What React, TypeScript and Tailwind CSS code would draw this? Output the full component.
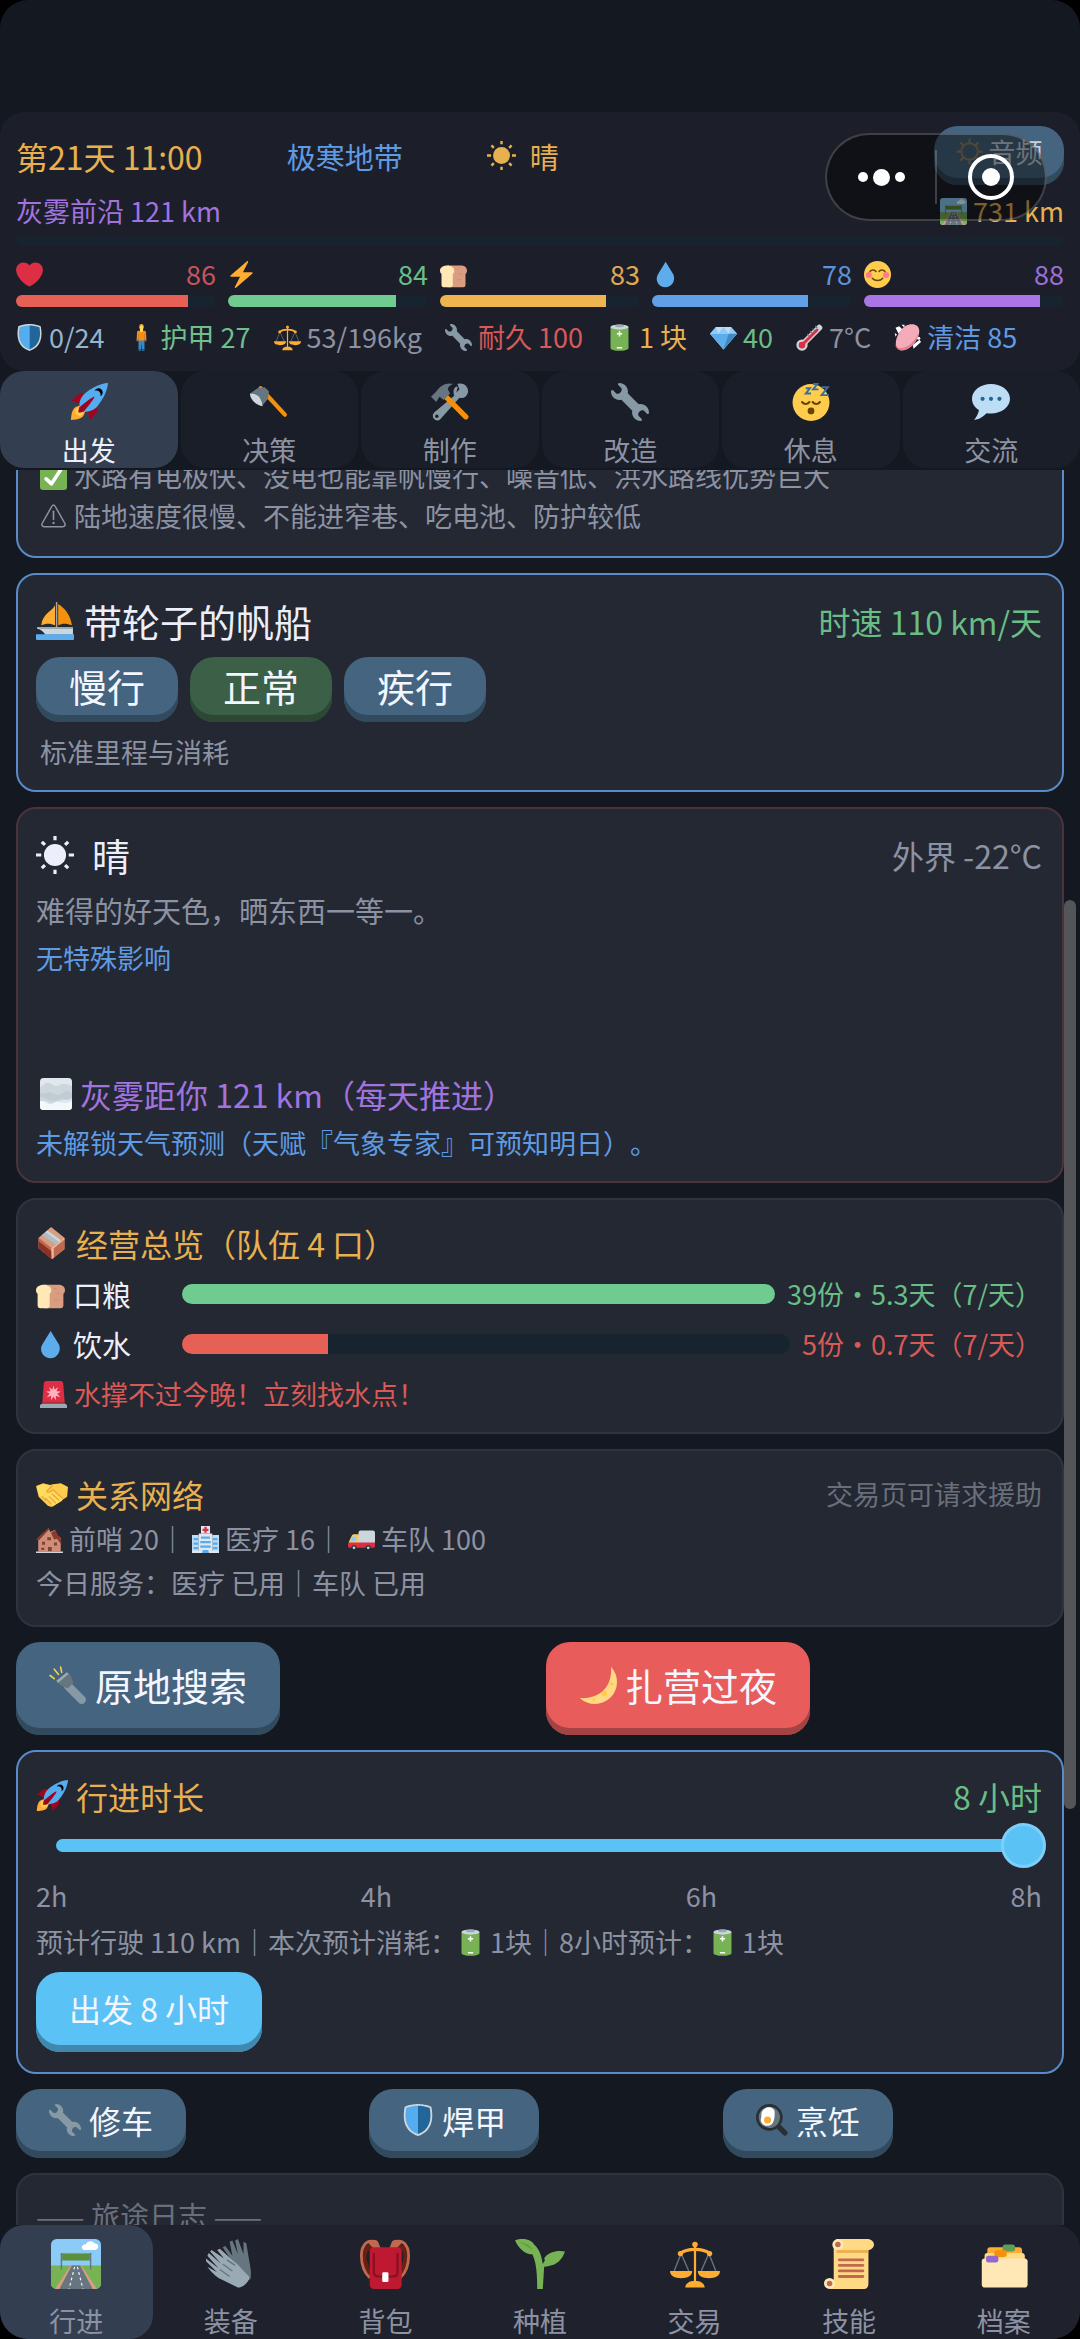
import { useState, type ReactNode } from "react";
import clsx from "clsx";

const WRENCH =
  "M27.989 19.977c-.622 0-1.225.078-1.806.213L15.811 9.818c.134-.581.212-1.184.212-1.806C16.023 3.587 12.436 0 8.012 0 7.11 0 5.91.916 6.909 1.915l2.997 2.997s.999 1.998-.999 3.995-3.996.998-3.996.998L1.915 6.908C.915 5.909 0 7.105 0 8.012c0 4.425 3.587 8.012 8.012 8.012.622 0 1.225-.078 1.806-.212l10.371 10.371c-.135.581-.213 1.184-.213 1.806 0 4.425 3.588 8.011 8.012 8.011.901 0 2.101-.916 1.102-1.915l-2.997-2.997s-.999-1.998.999-3.995 3.995-.999 3.995-.999l2.997 2.997c1 .999 1.916-.197 1.916-1.104 0-4.423-3.587-8.01-8.011-8.01z";

// all icons share a 36x36 view box
const icons: Record<string, ReactNode> = {
  heart: (
    <path fill="#DD2E44" d="M35.885 11.833c0-5.45-4.418-9.868-9.867-9.868-3.308 0-6.227 1.633-8.018 4.129-1.791-2.496-4.71-4.129-8.017-4.129-5.45 0-9.868 4.417-9.868 9.868 0 .772.098 1.52.266 2.241C1.751 22.587 11.216 31.568 18 34.034c6.783-2.466 16.249-11.447 17.617-19.959.17-.721.268-1.469.268-2.242z" />
  ),
  zap: (
    <path fill="#FFAC33" d="M32.938 15.651C32.792 15.26 32.418 15 32 15H19.925L26.89 1.458c.219-.426.106-.947-.271-1.243C26.437.071 26.218 0 26 0c-.233 0-.466.082-.653.243L18 6.588 3.347 19.243c-.316.273-.43.714-.284 1.105S3.582 21 4 21h12.075L9.11 34.542c-.219.426-.106.947.271 1.243.182.144.401.215.619.215.233 0 .466-.082.653-.243L18 29.412l14.653-12.655c.317-.273.43-.714.285-1.106z" />
  ),
  bread: (
    <>
      <path fill="#D99E82" d="M10 6h18c5 0 8 3 8 6.500 0 2.500-1 4-2 4.500v15a3 3 0 0 1-3 3H10z" />
      <path fill="#FFE8B6" d="M9.500 6C4 6 0 9 0 12.500 0 15 1 16.500 2 17v15a3 3 0 0 0 3 3h9a3 3 0 0 0 3-3V17c1-.5 2-2 2-4.500C19 9 15 6 9.500 6z" />
      <path stroke="#C1694F" strokeWidth="1" d="M22 10l4 1M25 17h5M22 25h6" opacity=".4" />
    </>
  ),
  drop: (
    <path fill="#5DADEC" d="M28.344 17.768L18.148 1.09 8 17.654c-2.200 3.510-2.392 8.074-.081 11.854 3.285 5.373 10.363 7.098 15.811 3.857 5.446-3.240 7.199-10.220 4.614-15.597z" />
  ),
  smile: (
    <>
      <circle cx="18" cy="18" r="18" fill="#FFCC4D" />
      <circle cx="6.500" cy="18.500" r="4" fill="#FF7892" />
      <circle cx="29.500" cy="18.500" r="4" fill="#FF7892" />
      <path fill="none" stroke="#664500" strokeWidth="2" strokeLinecap="round" d="M8 14c2-2.800 6-2.800 8 0M20 14c2-2.800 6-2.800 8 0M11 23c3.500 4 10.500 4 14 0" />
    </>
  ),
  shield: (
    <>
      <path fill="#CCD6DD" d="M33 3c-7-3-15-3-15-3S10 0 3 3C0 18 3 31 18 36c15-5 18-18 15-33z" />
      <path fill="#55ACEE" d="M18 33.884C6.412 29.729 1.961 19.831 4.760 4.444 11.063 2.029 17.928 2 18 2v31.884z" />
      <path fill="#226699" d="M31.240 4.444C24.937 2.029 18.071 2 18 2v31.884c11.588-4.155 16.039-14.053 13.240-29.440z" />
    </>
  ),
  person: (
    <>
      <path fill="#3B88C3" d="M14 20h8v14h-3.500l-.5-10-.5 10H14z" />
      <path fill="#F4900C" d="M14 9h8c1.500 0 2 1 2 2.500l.5 9.500h-2.500l-.5 1h-7l-.5-1h-2.500l.5-9.500C12 10 12.500 9 14 9z" />
      <path fill="#C1694F" d="M11.500 20h2.500v3h-2.500zM22 20h2.500v3H22zM14 13h.6v7H14zM21.400 13h.6v7h-.6z" />
      <path fill="#FFDC5D" d="M16 6h4v3.500l-2 1.500-2-1.500z" />
      <ellipse cx="18" cy="4.500" rx="2.800" ry="3.500" fill="#FFDC5D" />
      <path fill="#FFAC33" d="M15 4c0-2.500 1-4 3-4s3 1.500 3 4c-1-2-5-2-6 0z" />
      <path fill="#226699" d="M14 34h3.500v2H14zM18.500 34H22v2h-3.500z" />
    </>
  ),
  scales: (
    <>
      <path fill="none" stroke="#66757F" strokeWidth="1" d="M8 10.500L3 23M8 10.500L13.500 23M28 10.500L22.500 23M28 10.500L33 23" />
      <path fill="#FFAC33" d="M17.200 5h1.600v27h-1.600zM0 23h16c0 3.500-3.500 5.200-8 5.200S0 26.500 0 23zM20 23h16c0 3.500-3.500 5.200-8 5.200s-8-1.700-8-5.200zM11 35c0-3 3-5 7-5s7 2 7 5z" />
      <path fill="none" stroke="#FFAC33" strokeWidth="2.400" d="M7.500 10.500C12 6.500 24 6.500 28.500 10.500" />
      <circle cx="18" cy="4" r="2" fill="#FFAC33" />
      <circle cx="7.500" cy="10.500" r="1.900" fill="#FFAC33" />
      <circle cx="28.500" cy="10.500" r="1.900" fill="#FFAC33" />
    </>
  ),
  wrench: <path fill="#8899A6" d={WRENCH} />,
  battery: (
    <>
      <path fill="#77B255" d="M6 4h24v28c0 5-24 5-24 0z" />
      <ellipse cx="18" cy="4" rx="12" ry="3.500" fill="#CCD6DD" />
      <ellipse cx="18" cy="2.500" rx="6" ry="1.800" fill="#99AAB5" />
      <path fill="#fff" d="M17 9.500h2V12h2.500v2H19v2.500h-2V14h-2.500v-2H17zM14.500 30.500h7v2h-7z" />
    </>
  ),
  gem: (
    <>
      <path fill="#BDDDF4" d="M8 4h20l8 9-18 21L0 13z" />
      <path fill="#5DADEC" d="M0 13h36L18 34z" />
      <path fill="#8CCAF7" d="M0 13l8-9 3 9zM18 4l7 9H11zM36 13l-8-9-3 9z" />
      <path fill="#4289C1" d="M25 13h11L18 34z" />
    </>
  ),
  thermo: (
    <>
      <path stroke="#CCD6DD" strokeWidth="8" strokeLinecap="round" d="M31 5L10 26" />
      <circle cx="8" cy="28" r="7.500" fill="#CCD6DD" />
      <path stroke="#DD2E44" strokeWidth="4" strokeLinecap="round" d="M28 8L9 27" />
      <circle cx="8" cy="28" r="4.500" fill="#DD2E44" />
      <path stroke="#66757F" strokeWidth="1.400" d="M15 13l3 3M18.500 9.500l3 3M22 6l3 3M25.500 2.500l3 3" />
    </>
  ),
  soap: (
    <>
      <path fill="#fff" d="M2 5l5-2 4 4-5 6zM25 28l9-7 2 3-10 9zM10 1h4v4zM1 12l3 2-2 3z" />
      <path fill="#F4ABBA" d="M8 10C13 1 24-2 30 2s4 13-1 21-14 14-21 12S0 22 8 10z" />
      <path fill="#EA596E" d="M1 25c1 5 5 8 10 7 8-1 17-9 21-19-1 12-14 23-23 22C3 34 1 30 1 25z" opacity=".6" />
      <circle cx="33" cy="19" r="2" fill="#fff" />
    </>
  ),
  road: (
    <>
      <rect width="36" height="36" rx="4" fill="#8CCAF7" />
      <path fill="#77B255" d="M0 19h36v13a4 4 0 0 1-4 4H4a4 4 0 0 1-4-4z" />
      <path fill="#99AAB5" d="M7 10h22v1.500H7z" />
      <path fill="#66757F" d="M7 10h1v12H7zM28 10h1v12h-1z" />
      <path fill="#5C913B" d="M8 10.500h20v5H8z" />
      <path fill="#D99E82" d="M14 19h8l11 17H3z" />
      <path fill="#66757F" d="M15 19h6l9 17H6z" />
      <path stroke="#fff" strokeWidth=".8" strokeDasharray="2 2" d="M17 20l-4 16M19 20l4 16" />
      <path fill="#fff" d="M23 7.500c-2-2 0-4 2-3.500 1-3 5-3 6-1 2 0 3 1 3 2.500S32 8 31 8h-7z" />
    </>
  ),
  rocket: (
    <>
      <path fill="#A0041E" d="M1 17l8-7 16 1 1 16-7 8s.001-5.999-6-12-12-6-12-6z" />
      <path fill="#FFAC33" d="M.973 35s-.036-7.979 2.985-11S15 21.187 15 21.187 14.999 29 11.999 32c-3 3-11.026 3-11.026 3z" />
      <circle cx="9" cy="27" r="4" fill="#FFCC4D" />
      <path fill="#55ACEE" d="M35.999 0s-10 0-22 10c-6 5-6 14-4 16s11 2 16-4c10-12 10-22 10-22z" />
      <path fill="#000" d="M26.999 5c-1.623 0-3.013.971-3.641 2.360.502-.227 1.055-.36 1.641-.36 2.209 0 4 1.791 4 4 0 .586-.133 1.139-.359 1.640 1.389-.627 2.359-2.017 2.359-3.640 0-2.209-1.791-4-4-4z" />
      <path fill="#A0041E" d="M8 28s0-4 1-5 13.001-10.999 14-10-9.001 13-10.001 14S8 28 8 28z" />
    </>
  ),
  axe: (
    <>
      <path stroke="#F4900C" strokeWidth="4" strokeLinecap="round" d="M10 5l23 25" />
      <path fill="#66757F" d="M7 5l7-1 4 4-1 7-5 6C11 14 8 10 0 10z" />
      <path fill="#CCD6DD" d="M0 10c8 0 11 4 12 12C6 21 0 16 0 10z" />
    </>
  ),
  tools: (
    <>
      <g transform="translate(36 0) scale(-1 1)">
        <path fill="#8899A6" d="M12 9l-3-3 2-5C5-1 0 4 1 9c1 4 4 6 8 5l18 20c4 4 10-1 6-6L14 12c1-3 1-6-1-8-1-1-3-1-2 1z" />
      </g>
      <circle cx="5.500" cy="31.500" r="1.600" fill="#1b1f29" />
      <path stroke="#F4900C" strokeWidth="5" strokeLinecap="round" d="M14 13l19 19" />
      <path fill="#66757F" d="M0 13l5-5C9 2 15-1 21 1c-3 1-5 3-5 5l2 4-6 6-4-3-3 5z" />
    </>
  ),
  sleep: (
    <>
      <circle cx="18" cy="18.500" r="17.500" fill="#FFCC4D" />
      <path fill="none" stroke="#664500" strokeWidth="2" strokeLinecap="round" d="M9.500 18c2 2.500 5 2.500 7 0M19.500 18c2 2.500 5 2.500 7 0" />
      <circle cx="18" cy="26.500" r="3.200" fill="#664500" />
      <path fill="none" stroke="#3B6E99" strokeWidth="1.800" d="M13 5h4l-4 5h5M20 1h4l-4 5h5M28 4h6l-6 7.500h7" />
    </>
  ),
  speech: (
    <>
      <path fill="#BDDDF4" d="M18 1C8.059 1 0 7.268 0 15c0 4.368 2.574 8.268 6.604 10.835C6.080 28.144 4.859 31.569 2 35c5.758-.96 9.439-3.761 11.716-6.416 1.376.262 2.805.416 4.284.416 9.941 0 18-6.268 18-14S27.941 1 18 1z" />
      <g fill="#226699">
        <circle cx="10" cy="15" r="2" />
        <circle cx="18" cy="15" r="2" />
        <circle cx="26" cy="15" r="2" />
      </g>
    </>
  ),
  check: (
    <>
      <rect width="36" height="36" rx="4" fill="#77B255" />
      <path fill="#fff" d="M29.280 6.362c-1.156-.751-2.704-.422-3.458.736L14.936 23.877l-5.029-4.650c-1.014-.938-2.596-.875-3.533.138-.937 1.014-.875 2.596.139 3.533l7.209 6.666c.48.445 1.090.665 1.696.665.673 0 1.534-.282 2.099-1.139.332-.506 12.500-19.270 12.500-19.270.751-1.159.421-2.707-.737-3.458z" />
    </>
  ),
  warning: (
    <>
      <path fill="none" stroke="currentColor" strokeWidth="2" strokeLinejoin="round" d="M16 4c1-2 3-2 4 0l13 23c1.200 2.500 0 4.500-2.500 4.500h-25C3 31.500 1.800 29.500 3 27z" />
      <path stroke="currentColor" strokeWidth="2.200" strokeLinecap="round" d="M18 11v11" />
      <circle cx="18" cy="26.500" r="1.600" fill="currentColor" />
    </>
  ),
  boat: (
    <>
      <path fill="#FFAC33" d="M18 3C15 9 6 11 5 22c4-2 9-2 13 0z" />
      <path fill="#F4900C" d="M21 2c7 4 12 12 13 20-5-2-9-2-13 0z" />
      <path fill="#99AAB5" d="M18.800 0h1.400v26h-1.400z" />
      <path fill="#CCD6DD" d="M1 24h34v7H9c-2-3-4-5-8-6z" />
      <path fill="#99AAB5" d="M2 24h33v1.500H4z" />
      <path fill="#5DADEC" d="M0 30.500h36V35a1 1 0 0 1-1 1H1a1 1 0 0 1-1-1z" />
    </>
  ),
  sun: (
    <>
      <circle cx="18" cy="18" r="10.500" fill="currentColor" />
      <path stroke="currentColor" strokeWidth="3" d="M18 0v4M18 32v4M0 18h5M31 18h5M5.500 5.500l3 3M27.500 27.500l3 3M5.500 30.500l3-3M27.500 8.500l3-3" />
    </>
  ),
  gear: (
    <>
      <circle cx="18" cy="18" r="11" fill="none" stroke="currentColor" strokeWidth="2.500" />
      <path stroke="currentColor" strokeWidth="3" d="M18 1v5M18 30v5M1 18h5M30 18h5M6 6l3.500 3.500M26.500 26.500L30 30M6 30l3.500-3.500M26.500 9.500L30 6" />
    </>
  ),
  fog: (
    <>
      <rect width="36" height="36" rx="4" fill="#E1E8ED" />
      <path fill="#CCD6DD" d="M0 10c5-2 6-6 11-4s6 5 11 2 9-1 14 1v14c-5 4-9 0-13 3s-8 6-13 2-6-1-10-2z" />
      <path fill="#B8C4CD" d="M0 17c6 3 8-3 14 0s8 3 13-1 6 0 9 1v5c-6 4-10-1-15 2s-12 1-15-1-4-1-6-1z" opacity=".6" />
      <path fill="#F5F8FA" d="M0 26c5-1 7 4 12 3s6-4 11-2 8 2 13-1v6a4 4 0 0 1-4 4H4a4 4 0 0 1-4-4z" />
    </>
  ),
  brick: (
    <>
      <path fill="#D99E82" d="M3 12L17 0l15 12v13L18 36 3 24z" />
      <path fill="#C1694F" d="M3 12l15 12v12L3 24z" />
      <path fill="#8A3324" d="M3 16l14 11v9L3 24z" />
      <path fill="#CCD6DD" d="M7 9l6-5 14 10v6l-3 1z" />
      <path fill="#99AAB5" d="M7 9l4-3 15 11v3l-3 1z" opacity=".6" />
      <path fill="#C1694F" d="M19 24l13-11v12L18 36z" />
      <path fill="#E8B59C" d="M17 24l15-12v2L20 24v11l-2 1z" />
    </>
  ),
  siren: (
    <>
      <path fill="#99AAB5" d="M3 30h30l3 2v4H0v-4z" />
      <path fill="#DD2E44" d="M5 4c0-2 1-4 4-4h18c3 0 4 2 4 4l2 25H3z" />
      <path fill="#FFB3C1" d="M18 6l1.500 5.500L24 8l-2 5.500 6 .5-5 3 4 4.500-6-2 .5 6L18 21l-3.500 4.500.5-6-6 2 4-4.500-5-3 6-.5L12 8l4.500 3.500z" />
    </>
  ),
  handshake: (
    <>
      <path fill="#FFCC4D" d="M0 9l8-3 8 2 3-1 9-1 8 4-1 11-7 5-9 6c-2 1-4 0-6-1L3 21z" />
      <path fill="#FFDC5D" d="M1 10l7-3 8 2-5 7c2 3 6 0 8-1l11 9-1 2-9 5L4 20z" />
      <path fill="none" stroke="#E9A23B" strokeWidth="1.300" strokeLinecap="round" d="M18 9l-6 6c2 2 5 0 7-2l11 10M18 18l8 7M15 21l7 7M11 23l6 6M7 21l4 4" />
    </>
  ),
  house: (
    <>
      <path fill="#D08C76" d="M3 34V16L17 3l2 5 6-3 2 6 6 5v18z" />
      <path fill="#8B3A2B" d="M0 18L16 3l2 1L4 19zM20 9l6-4 3 7 4 5 1 8-6-8-4 1z" />
      <path fill="#7A4436" d="M8 21h4v4H8zM16 28h5v7h-5zM24 22h4v4h-4zM15 15h5v4h-5zM7 29h4v3H7z" />
      <path fill="#CCD6DD" d="M0 34h36v2H0z" />
    </>
  ),
  hospital: (
    <>
      <path fill="#E1E8ED" d="M9 10h18v24H9z" />
      <path fill="#BDDDF4" d="M0 12h9v22H0zM27 12h9v22h-9z" />
      <path fill="#DCE8F0" d="M12 0h12v10H12z" />
      <path fill="#DD2E44" d="M16.500 1h3v2.500H22v3h-2.500V9h-3V6.500H14v-3h2.500z" />
      <path fill="#55ACEE" d="M2 16h6v3H2zM2 22h6v3H2zM2 28h6v3H2zM28 16h6v3h-6zM28 22h6v3h-6zM28 28h6v3h-6zM12 14h12v3H12zM11 20h14v3H11zM11 26h14v3H11zM14 32h8v4h-8z" />
      <path fill="#E1E8ED" d="M0 33h14v3H0zM22 33h14v3H22z" />
    </>
  ),
  van: (
    <>
      <path fill="#CCD6DD" d="M14 9a3 3 0 0 1 3-3h16a3 3 0 0 1 3 3v17H12z" />
      <path fill="#FFCC4D" d="M5 13c1-2 2-2 3-2h6v13H1c0-4 2-7 4-11z" />
      <path fill="#8CCAF7" d="M6 14h5v6H3z" />
      <path fill="#DD2E44" d="M0 24c0-1 1-2 2-2h34v5a2 2 0 0 1-2 2H2c-1 0-2-1-2-2z" />
      <g fill="#292F33">
        <circle cx="8" cy="29" r="3.500" />
        <circle cx="27" cy="29" r="3.500" />
      </g>
      <circle cx="8" cy="29" r="1.800" fill="#CCD6DD" />
      <circle cx="27" cy="29" r="1.800" fill="#CCD6DD" />
    </>
  ),
  flashlight: (
    <>
      <path stroke="#F2D35C" strokeWidth="1.500" strokeLinecap="round" d="M1 9l4 3M5 3l4 5M11 1l1 5" />
      <path stroke="#8899A6" strokeWidth="8" strokeLinecap="round" d="M18 19l13 13" />
      <path fill="#66757F" d="M7 14L17 6c4 2 5 6 6 10l-5 5c-4-1-8-2-11-7z" />
      <path fill="#99AAB5" d="M7 14L17 6l1.500 1.500-10 8.500z" />
    </>
  ),
  moon: (
    <>
      <path fill="#FFD983" d="M30.312.776C32 19 20 32 .776 30.312c8.199 7.717 21.091 7.588 29.107-.429C37.900 21.867 38.030 8.975 30.312.776z" />
      <g fill="#FFCC4D">
        <circle cx="31" cy="17" r="1.600" />
        <circle cx="24" cy="26" r="2.600" />
        <circle cx="14" cy="32" r="1.500" />
      </g>
    </>
  ),
  egg: (
    <>
      <path stroke="#292F33" strokeWidth="6" strokeLinecap="round" d="M26 26l6.500 6.500" />
      <circle cx="15" cy="15" r="15" fill="#292F33" />
      <circle cx="15" cy="15" r="12" fill="#66757F" />
      <path fill="#fff" d="M10 5c4-3 11-1 11 4s0 8-2 12-9 5-12 1-1-5-1-9 1-6 4-8z" />
      <circle cx="13" cy="18" r="4" fill="#FFAC33" />
    </>
  ),
  gloves: (
    <>
      <path fill="#66757F" d="M14 9l-2-3 2-1 5 7L17 2l2-1 4 10L21 1l2-1 4 11 0-9 2 1 2 12c1 6 2 9 1 14l-3 1z" />
      <path fill="#99AAB5" d="M4 8l9 6L8 8l2-1 10 9c3 2 5 5 8 8l3 3c1 3-4 8-8 8L9 28c-3-2-5-4-8-8l7 4-8-8v-2l9 7-8-9 1-2 9 8-8-9z" />
      <path fill="none" stroke="#66757F" strokeWidth="1" d="M12 18l7 5M10 22l7 5M15 15l6 4" />
    </>
  ),
  backpack: (
    <>
      <path fill="none" stroke="#662113" strokeWidth="4" d="M10 7C3 3 1 12 4 19c1 4 3 7 5 8M26 7c7-4 9 5 6 12-1 4-3 7-5 8" />
      <path fill="none" stroke="#C1694F" strokeWidth="2" d="M12 8V3C6-1 1 4 1 12c0 6 2 12 6 16M24 8V3c6-4 11 1 11 9 0 6-2 12-6 16" />
      <path fill="#C1694F" d="M5 2c3-2 7-2 8 0l2 5h-5zM31 2c-3-2-7-2-8 0l-2 5h5z" />
      <rect x="7" y="6" width="23" height="30" rx="3" fill="#BE1931" />
      <path fill="none" stroke="#8A0F22" strokeWidth="1.600" d="M10 10v14c0 2 1 3 3 3h11c2 0 3-1 3-3V10" />
      <rect x="16" y="24" width="4.500" height="7" rx="1" fill="#fff" />
    </>
  ),
  seedling: (
    <>
      <path fill="#77B255" d="M10 2c6 2 9 8 10 16 3-6 8-9 13-8-1 5-7 10-12 10l-1 16h-4C16 22 15 12 9 6z" />
      <path fill="#77B255" d="M0 1c5-2 13-1 14 4l-1 6C7 11 3 7 0 1zM36 9c-5-1-12 0-15 5l2 5c6 1 11-4 13-10z" />
      <path fill="#3E721D" d="M3 2c5 1 8 3 10 6-3-2-6-4-10-6z" opacity=".4" />
    </>
  ),
  scroll: (
    <>
      <path fill="#FFD983" d="M9 0h22c3 0 5 2 5 4s-2 4-4 4v24c0 2-1 4-3 4H4c2-1 3-3 3-6V4z" />
      <path fill="#E39F3D" d="M9 8h23v2H9z" opacity=".7" />
      <circle cx="10" cy="4" r="4" fill="#FFE8B6" />
      <circle cx="10" cy="4" r="2" fill="#C1694F" />
      <circle cx="4" cy="32" r="4" fill="#FFE8B6" />
      <circle cx="4" cy="32" r="2" fill="#C1694F" />
      <path stroke="#C1694F" strokeWidth="2" strokeLinecap="round" d="M11 15h17M11 19h17M11 23h17M11 27h17" />
    </>
  ),
  folder: (
    <>
      <path fill="#FFAC33" d="M6 8c0-1.500 1-2 2-2h21c1 0 2 1 2 2v8H6z" />
      <rect x="17" y="4" width="9" height="5" rx="2" fill="#5C9E58" />
      <path fill="#FFD983" d="M4 12c0-1.500 1-2 2-2h25c1 0 2 1 2 2v8H4z" />
      <rect x="11" y="8" width="9" height="5" rx="2" fill="#F4900C" />
      <path fill="#FFE8B6" d="M2 16c0-1.500 1-2 2-2h29c1 0 2 1 2 2v17c0 1-1 2-2 2H4c-1 0-2-1-2-2z" />
      <rect x="5" y="12" width="9" height="5" rx="2" fill="#9266CC" />
    </>
  ),
};

function Icon({ name, className = "size-[27px]" }: { name: string; className?: string }) {
  return (
    <svg viewBox="0 0 36 36" fill="none" aria-hidden="true" className={clsx("inline-block shrink-0", className)}>
      {icons[name]}
    </svg>
  );
}

const tones = {
  slate: "bg-[#45647f] shadow-[inset_0_-7px_0_#324a5d]",
  green: "bg-[#3b5f47] shadow-[inset_0_-7px_0_#2c4835]",
  red: "bg-[#e85d5b] shadow-[inset_0_-7px_0_#a34344]",
  sky: "bg-[#5ac2f5] shadow-[inset_0_-7px_0_#4088ae]",
};

function Pill({ tone = "slate", className, onClick, children }: { tone?: keyof typeof tones; className: string; onClick?: () => void; children: ReactNode }) {
  return (
    <button
      onClick={onClick}
      className={clsx("inline-flex items-center justify-center justify-self-start gap-2 rounded-[24px] px-[33px] pb-2 text-[#f3f6ff] whitespace-nowrap", tones[tone], className)}
    >
      {children}
    </button>
  );
}

function Card({ border = "border-[#2f333f]", children }: { border?: string; children: ReactNode }) {
  return <section className={clsx("shrink-0 rounded-[20px] border-2 bg-[#232833] py-5 pr-5 pl-[18px]", border)}>{children}</section>;
}

const stats = [
  { icon: "heart", value: 86, text: "text-[#c9545d]", bar: "bg-[#e66056]" },
  { icon: "zap", value: 84, text: "text-[#69bd85]", bar: "bg-[#6fcb90]" },
  { icon: "bread", value: 83, text: "text-[#e0a951]", bar: "bg-[#edb450]" },
  { icon: "drop", value: 78, text: "text-[#5b94dc]", bar: "bg-[#61a0e6]" },
  { icon: "smile", value: 88, text: "text-[#9d6fd6]", bar: "bg-[#aa76e6]" },
];

const status = [
  { icon: "shield", label: "0/24", color: "text-[#93b5d0]" },
  { icon: "person", label: "护甲 27", color: "text-[#6fbf8d]" },
  { icon: "scales", label: "53/196kg", color: "text-[#8d92a3]" },
  { icon: "wrench", label: "耐久 100", color: "text-[#d75a57]" },
  { icon: "battery", label: "1 块", color: "text-[#e8b04f]" },
  { icon: "gem", label: "40", color: "text-[#69bd85]" },
  { icon: "thermo", label: "7°C", color: "text-[#8d92a3]" },
  { icon: "soap", label: "清洁 85", color: "text-[#5f9be3]" },
];

const tabs = [
  { icon: "rocket", label: "出发" },
  { icon: "axe", label: "决策" },
  { icon: "tools", label: "制作" },
  { icon: "wrench", label: "改造" },
  { icon: "sleep", label: "休息" },
  { icon: "speech", label: "交流" },
];

const pages = [
  { icon: "road", label: "行进" },
  { icon: "gloves", label: "装备" },
  { icon: "backpack", label: "背包" },
  { icon: "seedling", label: "种植" },
  { icon: "scales", label: "交易" },
  { icon: "scroll", label: "技能" },
  { icon: "folder", label: "档案" },
];

const supplies = [
  { icon: "bread", label: "口粮", percent: 100, info: "39份・5.3天（7/天）", text: "text-[#69bd85]", bar: "bg-[#6fcb90]" },
  { icon: "drop", label: "饮水", percent: 24, info: "5份・0.7天（7/天）", text: "text-[#d75a57]", bar: "bg-[#e66056]" },
];

export default function App() {
  const [tab, setTab] = useState("出发");
  const [page, setPage] = useState("行进");
  const [speed, setSpeed] = useState("正常");
  const [hours, setHours] = useState(8);

  return (
    <div className="bg-black">
      <div className="relative flex h-screen flex-col overflow-hidden rounded-[28px] bg-[#141820] font-['Noto_Sans_CJK_SC',sans-serif] text-[27px] leading-9 text-[#8d92a3] [text-spacing-trim:space-all]">
        {/* Status header */}
        <header className="mt-28 shrink-0 rounded-[24px] bg-[#1c1f2a] px-4 pt-3.5 pb-4">
          <div className="flex h-[59px] items-center gap-[84px]">
            <span className="text-[32px] text-[#e8b04f]">第21天 11:00</span>
            <span className="text-[29px] text-[#5f9be3]">极寒地带</span>
            <span className="flex items-center gap-3.5 text-[29px] text-[#e8b04f]">
              <Icon name="sun" className="size-[29px]" />晴
            </span>
            <button className="ml-auto flex h-[59px] w-[130px] items-center justify-center gap-1.5 rounded-[24px] bg-[#45647f] pb-2 text-[#c9d2dc] shadow-[inset_0_-7px_0_#324a5d]">
              <Icon name="gear" className="size-[27px] text-[#9a8266]" />音频
            </button>
          </div>
          <div className="mt-2 flex justify-between">
            <span className="text-[#a273df]">灰雾前沿 121 km</span>
            <span className="flex items-center gap-1.5 text-[#e8b04f]">
              <Icon name="road" />731 km
            </span>
          </div>
          <div className="mt-2 h-[9px] rounded-full bg-[#17232f]" />
          <div className="mt-2.5 grid grid-cols-5 gap-3">
            {stats.map((s) => (
              <div key={s.icon}>
                <div className={clsx("flex items-center justify-between", s.text)}>
                  <Icon name={s.icon} />
                  <span>{s.value}</span>
                </div>
                <div className="mt-[3px] h-3 overflow-hidden rounded-full bg-[#17232f]">
                  <div className={clsx("h-full", s.bar)} style={{ width: `${s.value}%` }} />
                </div>
              </div>
            ))}
          </div>
          <div className="mt-3 flex gap-[23px] whitespace-nowrap">
            {status.map((s) => (
              <span key={s.icon} className={clsx("flex items-center gap-1.5", s.color)}>
                <Icon name={s.icon} />
                {s.label}
              </span>
            ))}
          </div>
        </header>

        {/* Action tabs */}
        <nav className="mb-0.5 grid shrink-0 grid-cols-6 gap-[3px]">
          {tabs.map((t) => (
            <button
              key={t.label}
              onClick={() => setTab(t.label)}
              className={clsx("flex flex-col items-center gap-[11px] rounded-[24px] pt-3", tab === t.label ? "bg-[#343e51] text-[#eceffb]" : "bg-[#1a1e28]")}
            >
              <Icon name={t.icon} className="size-[38px]" />
              <span>{t.label}</span>
            </button>
          ))}
        </nav>

        <main className="flex min-h-0 flex-1 flex-col gap-[15px] overflow-hidden px-4">
          <div className="-mt-9 shrink-0">
            <Card border="border-[#5a8bc9]">
              <p className="flex items-center gap-[7px] px-1 leading-10">
                <Icon name="check" />水路有电极快、没电也能靠帆慢行、噪音低、洪水路线优势巨大
              </p>
              <p className="flex items-center gap-[7px] px-1 leading-10">
                <Icon name="warning" />陆地速度很慢、不能进窄巷、吃电池、防护较低
              </p>
            </Card>
          </div>

          <Card border="border-[#5a8bc9]">
            <div className="flex items-center justify-between leading-[52px]">
              <h2 className="flex items-center gap-2.5 text-[38px] text-[#eceffb]">
                <Icon name="boat" className="size-[38px]" />带轮子的帆船
              </h2>
              <span className="text-[32px] text-[#69bd85]">时速 110 km/天</span>
            </div>
            <div className="mt-2.5 flex gap-3">
              {["慢行", "正常", "疾行"].map((s) => (
                <Pill key={s} tone={speed === s ? "green" : "slate"} onClick={() => setSpeed(s)} className="h-[65px] text-[38px]">
                  {s}
                </Pill>
              ))}
            </div>
            <p className="mt-3 px-1">标准里程与消耗</p>
          </Card>

          <Card border="border-[#4b333d]">
            <div className="flex items-center justify-between leading-[52px]">
              <h2 className="flex items-center gap-[18px] text-[38px] text-[#eceffb]">
                <Icon name="sun" className="size-[38px]" />晴
              </h2>
              <span className="text-[32px]">外界 -22°C</span>
            </div>
            <p className="mt-2 text-[29px] leading-[42px]">难得的好天色，晒东西一等一。</p>
            <p className="mt-2 leading-[38px] text-[#5f9be3]">无特殊影响</p>
            <p className="mt-24 flex items-center gap-2 px-1 text-[32px] leading-[42px] text-[#a273df]">
              <Icon name="fog" className="size-8" />灰雾距你 121 km（每天推进）
            </p>
            <p className="mt-2.5 text-[#5f9be3]">未解锁天气预测（天赋『气象专家』可预知明日）。</p>
          </Card>

          <Card>
            <h2 className="flex items-center gap-2 text-[32px] leading-[46px] text-[#e8b04f]">
              <Icon name="brick" className="size-8" />经营总览（队伍 4 口）
            </h2>
            <div className="mt-2 flex flex-col gap-2.5">
              {supplies.map((s) => (
                <div key={s.label} className="flex h-10 items-center gap-3">
                  <span className="flex w-[134px] items-center gap-2 text-[29px] text-[#eceffb]">
                    <Icon name={s.icon} className="size-[29px]" />
                    {s.label}
                  </span>
                  <div className="h-5 flex-1 overflow-hidden rounded-full bg-[#17232f]">
                    <div className={clsx("h-full", s.bar)} style={{ width: `${s.percent}%` }} />
                  </div>
                  <span className={s.text}>{s.info}</span>
                </div>
              ))}
            </div>
            <p className="mt-3 flex items-center gap-[7px] px-1 text-[#d75a57]">
              <Icon name="siren" />水撑不过今晚！立刻找水点！
            </p>
          </Card>

          <Card>
            <div className="flex items-center justify-between leading-[46px]">
              <h2 className="flex items-center gap-2 text-[32px] text-[#e8b04f]">
                <Icon name="handshake" className="size-8" />关系网络
              </h2>
              <span className="text-[#6a6e7b]">交易页可请求援助</span>
            </div>
            <p className="flex items-center gap-1.5 leading-[44px]">
              <Icon name="house" />前哨 20｜
              <Icon name="hospital" />医疗 16｜
              <Icon name="van" />车队 100
            </p>
            <p className="leading-[44px]">今日服务：医疗 已用｜车队 已用</p>
          </Card>

          <div className="grid shrink-0 grid-cols-2 gap-3">
            <Pill className="h-[93px] text-[38px]">
              <Icon name="flashlight" className="size-[38px]" />原地搜索
            </Pill>
            <Pill tone="red" className="h-[93px] text-[38px]">
              <Icon name="moon" className="size-[38px]" />扎营过夜
            </Pill>
          </div>

          <Card border="border-[#5a8bc9]">
            <div className="flex items-center justify-between text-[32px] leading-[48px]">
              <label htmlFor="hours" className="flex items-center gap-2 text-[#e8b04f]">
                <Icon name="rocket" className="size-8" />行进时长
              </label>
              <span className="text-[#69bd85]">{hours} 小时</span>
            </div>
            <div className="mt-0.5 -mr-1 grid items-center">
              <div className="col-start-1 row-start-1 mx-5 h-[13px] overflow-hidden rounded-full bg-[#17232f]">
                <div className="h-full bg-[#5ac2f5]" style={{ width: `${((hours - 2) / 6) * 100}%` }} />
              </div>
              <input
                id="hours"
                type="range"
                min={2}
                max={8}
                step={2}
                value={hours}
                onChange={(e) => setHours(Number(e.target.value))}
                className="col-start-1 row-start-1 h-[46px] w-full appearance-none bg-transparent [&::-webkit-slider-thumb]:size-[45px] [&::-webkit-slider-thumb]:appearance-none [&::-webkit-slider-thumb]:rounded-full [&::-webkit-slider-thumb]:border-3 [&::-webkit-slider-thumb]:border-[#7dcefa] [&::-webkit-slider-thumb]:bg-[#5ac2f5]"
              />
            </div>
            <div className="mt-2.5 flex justify-between">
              {[2, 4, 6, 8].map((h) => (
                <span key={h}>{h}h</span>
              ))}
            </div>
            <p className="mt-2.5 flex items-center">
              预计行驶 110 km｜本次预计消耗：
              <Icon name="battery" className="mr-1.5 size-[27px]" />
              1块｜8小时预计：
              <Icon name="battery" className="mr-1.5 size-[27px]" />
              1块
            </p>
            <Pill tone="sky" className="mt-3 h-20 text-[32px]">
              出发 {hours} 小时
            </Pill>
          </Card>

          <div className="grid shrink-0 grid-cols-3 gap-3">
            <Pill className="h-[69px] text-[32px]">
              <Icon name="wrench" className="size-8" />修车
            </Pill>
            <Pill className="h-[69px] text-[32px]">
              <Icon name="shield" className="size-8" />焊甲
            </Pill>
            <Pill className="h-[69px] text-[32px]">
              <Icon name="egg" className="size-8" />烹饪
            </Pill>
          </div>

          <Card>
            <h2 className="text-[29px] leading-10 text-[#6a6e7b]">—— 旅途日志 ——</h2>
          </Card>
        </main>

        {/* Bottom navigation */}
        <nav className="grid shrink-0 grid-cols-7 gap-0.5 rounded-[24px] bg-[#1f222d]">
          {pages.map((p) => (
            <button
              key={p.label}
              onClick={() => setPage(p.label)}
              className={clsx("flex flex-col items-center gap-3.5 rounded-[24px] pt-3.5", page === p.label && "bg-[#343e51]")}
            >
              <Icon name={p.icon} className="size-[50px]" />
              <span>{p.label}</span>
            </button>
          ))}
        </nav>

        {/* Mini-program capsule */}
        <div className="absolute top-[133px] right-[33px] flex h-[88px] w-[222px] items-center rounded-full border-2 border-white/20 bg-black/45">
          <button aria-label="更多" className="flex flex-1 items-center justify-center gap-[5px]">
            <span className="size-2.5 rounded-full bg-white" />
            <span className="size-[17px] rounded-full bg-white" />
            <span className="size-2.5 rounded-full bg-white" />
          </button>
          <span className="h-[54px] w-0.5 bg-white/20" />
          <button aria-label="关闭" className="flex flex-1 justify-center">
            <span className="flex size-[46px] items-center justify-center rounded-full border-4 border-white">
              <span className="size-[18px] rounded-full bg-white" />
            </span>
          </button>
        </div>

        {/* Scroll thumb */}
        <div className="absolute top-[900px] right-1 h-[909px] w-3 rounded-full bg-[#545558]" />
      </div>
    </div>
  );
}
